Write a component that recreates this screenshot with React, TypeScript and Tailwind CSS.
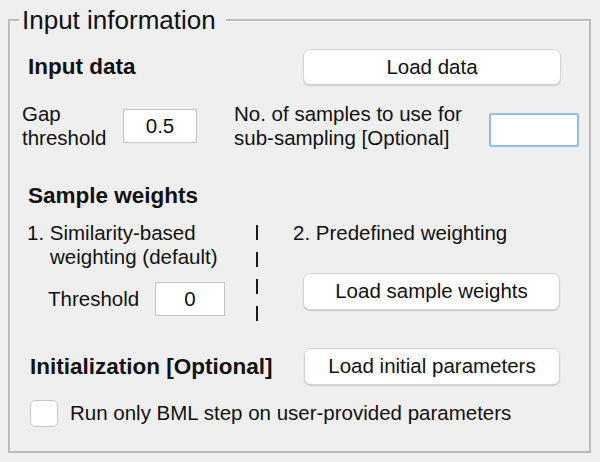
const font = { fontFamily: '"Liberation Sans", Arial, Helvetica, sans-serif' };

function MacButton({ label, className = "" }: { label: string; className?: string }) {
  return (
    <button
      className={`flex items-center justify-center rounded-[7px] border border-[#d4d4d4] bg-white text-[20.5px] leading-none text-[#111] shadow-[0_1px_1px_rgba(0,0,0,0.16)] ${className}`}
    >
      {label}
    </button>
  );
}

function Bar() {
  return <div className="h-[15px] w-[2px] shrink-0 bg-[#1a1a1a]" />;
}

export default function App() {
  return (
    <div className="h-[462px] w-[600px] overflow-hidden bg-[#efefef] pt-[19px] text-[#111]" style={font}>
      <div className="ml-[8px] h-[434px] w-[583px] border-2 border-[#bcbcbc] shadow-[inset_1px_1px_0_#fafafa]">
        <div className="-mt-[16px] ml-[9px] w-fit bg-[#efefef] px-[3px] pr-[10px] text-[26px] leading-[30px] text-[#111]">
          Input information
        </div>

        {/* input data */}
        <div className="mt-[14px] flex h-[36px] items-center">
          <div className="ml-[18px] w-[275px] text-[22.5px] font-bold">Input data</div>
          <MacButton label="Load data" className="h-[36px] w-[258px]" />
        </div>

        <div className="mt-[17px] flex h-[48px] items-center">
          <div className="ml-[12px] w-[101px] text-[20.5px] leading-[24px]">
            Gap
            <br />
            threshold
          </div>
          <div className="flex h-[34px] w-[74px] items-center justify-center border border-[#c4c4c4] bg-white text-[20.5px]">
            0.5
          </div>
          <div className="ml-[37px] w-[255px] text-[20.5px] leading-[24px]">
            No. of samples to use for
            <br />
            sub-sampling [Optional]
          </div>
          <div className="mt-[8px] h-[34px] w-[90px] rounded-[2px] border-2 border-[#8fbcf0] bg-white" />
        </div>

        {/* sample weights */}
        <div className="ml-[18px] mt-[33px] text-[22.5px] font-bold leading-[26px]">Sample weights</div>

        <div className="mt-[12px] flex items-start">
          <div className="ml-[17px] w-[229px] text-[20.5px] leading-[24px]">
            <div>1. Similarity-based</div>
            <div className="pl-[23px]">weighting (default)</div>
            <div className="mt-[13px] flex items-center">
              <div className="ml-[21px] w-[107px]">Threshold</div>
              <div className="flex h-[34px] w-[70px] items-center justify-center border border-[#c4c4c4] bg-white">
                0
              </div>
            </div>
          </div>
          <div className="mt-[4px] flex flex-col gap-[12px]">
            <Bar />
            <Bar />
            <Bar />
            <Bar />
          </div>
          <div className="ml-[35px] text-[20.5px] leading-[24px]">
            <div>2. Predefined weighting</div>
            <MacButton label="Load sample weights" className="ml-[10px] mt-[28px] h-[37px] w-[257px]" />
          </div>
        </div>

        {/* initialization */}
        <div className="mt-[27px] flex h-[37px] items-center">
          <div className="ml-[20px] w-[274px] text-[22.5px] font-bold">Initialization [Optional]</div>
          <MacButton label="Load initial parameters" className="h-[37px] w-[256px]" />
        </div>

        <div className="mt-[13px] flex items-center">
          <div className="ml-[20px] h-[27px] w-[28px] rounded-[5px] border border-[#c8c8c8] bg-white" />
          <div className="ml-[12px] text-[20.5px]">Run only BML step on user-provided parameters</div>
        </div>
      </div>
    </div>
  );
}
